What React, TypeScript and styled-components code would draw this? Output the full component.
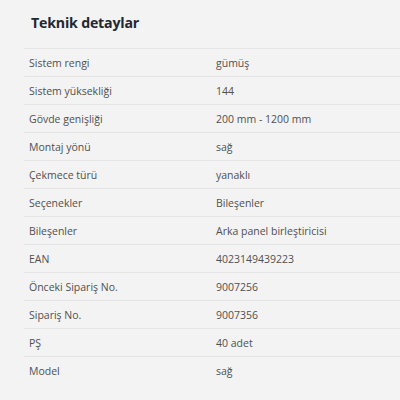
import React from "react";
import styled, { createGlobalStyle } from "styled-components";

const Global = createGlobalStyle`
  html, body { margin: 0; padding: 0; background: #f3f3f3; }
  body { font-family: "Open Sans", "Liberation Sans", sans-serif; }
`;

const Page = styled.div`
  width: 400px;
  height: 400px;
  background: #f3f3f3;
  padding: 0 0 0 24px;
  box-sizing: border-box;
  overflow: hidden;
`;

const Title = styled.h2`
  margin: 0;
  height: 48px;
  box-sizing: border-box;
  padding: 12px 0 0 7px;
  font-size: 14.2px;
  font-weight: 700;
  letter-spacing: -0.2px;
  color: #222831;
  line-height: 22px;
`;

const Table = styled.div`
  display: flex;
  flex-direction: column;
`;

const Row = styled.div`
  display: grid;
  grid-template-columns: 187px 1fr;
  height: 28px;
  align-items: center;
  border-top: 1px solid #e4e4e4;
  box-sizing: border-box;
  padding-left: 5px;
  font-size: 10.5px;
  color: #505050;
`;

const Cell = styled.span`
  white-space: nowrap;
`;

const rows: [string, string][] = [
  ["Sistem rengi", "gümüş"],
  ["Sistem yüksekliği", "144"],
  ["Gövde genişliği", "200 mm - 1200 mm"],
  ["Montaj yönü", "sağ"],
  ["Çekmece türü", "yanaklı"],
  ["Seçenekler", "Bileşenler"],
  ["Bileşenler", "Arka panel birleştiricisi"],
  ["EAN", "4023149439223"],
  ["Önceki Sipariş No.", "9007256"],
  ["Sipariş No.", "9007356"],
  ["PŞ", "40 adet"],
  ["Model", "sağ"],
];

export default function App() {
  return (
    <>
      <Global />
      <Page>
        <Title>Teknik detaylar</Title>
        <Table>
          {rows.map(([k, v]) => (
            <Row key={k}>
              <Cell>{k}</Cell>
              <Cell>{v}</Cell>
            </Row>
          ))}
        </Table>
      </Page>
    </>
  );
}
